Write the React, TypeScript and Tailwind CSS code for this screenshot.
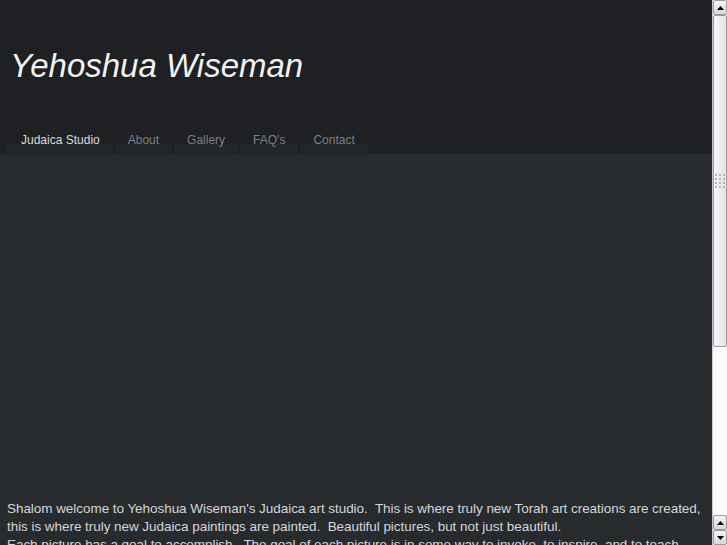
const tabs = ['Judaica Studio', 'About', 'Gallery', "FAQ's", 'Contact']

function Arrow({ down }: { down?: boolean }) {
  return (
    <div className="h-[15px] shrink-0 flex items-center justify-center bg-gradient-to-b from-[#f4f4f6] to-[#d8d8dc] border border-[#9c9c9c] rounded-[2px]">
      <svg width="7" height="4" viewBox="0 0 7 4" className={down ? 'rotate-180' : ''}>
        <polygon points="3.5,0 7,4 0,4" fill="#000" />
      </svg>
    </div>
  )
}

function Scrollbar() {
  return (
    <div className="w-[15px] h-full flex flex-col bg-[#fbfbfb] border-l border-[#c8c8c8]">
      <Arrow />
      <div className="h-[332px] shrink-0 flex flex-col items-center justify-center bg-gradient-to-r from-[#f6f6fa] to-[#e2e2ea] border border-[#9a9a9a] rounded-[2px]">
        <div className="grid grid-cols-3 gap-[2px]">
          {Array.from({ length: 12 }).map((_, i) => (
            <div key={i} className="w-[2px] h-[2px] bg-[#b4b4b8]" />
          ))}
        </div>
      </div>
      <div className="flex-1" />
      <Arrow />
      <Arrow down />
    </div>
  )
}

export default function App() {
  return (
    <div className="h-[545px] w-full flex overflow-hidden bg-[#282b2e] font-['Liberation_Sans',Arial,sans-serif]">
      <div className="flex-1 min-w-0 flex flex-col">
        <header className="h-[154px] shrink-0 bg-[#1e2023] flex flex-col">
          <h1 className="pl-[10px] pt-[44px] text-[33px] leading-[44px] italic text-[#f2f2f2]">Yehoshua Wiseman</h1>
          <nav className="mt-auto flex gap-[2px] pl-[7px]">
            {tabs.map((t, i) => (
              <div key={t} className="flex flex-col">
                <span className={`relative z-10 px-[13px] pt-[2px] text-[12px] leading-[14px] ${i === 0 ? 'pl-[14px] text-[#dcdcdc]' : 'text-[#7c8185]'}`}>{t}</span>
                <div className="h-[10px] -mt-[3px] bg-[#24272a]" />
              </div>
            ))}
          </nav>
        </header>
        <div className="h-[346px] shrink-0" />
        <div className="pl-[7px] pr-[2px] text-[13.5px] leading-[18px] tracking-[-0.05px] text-[#d4d6d8] whitespace-pre-wrap">
          {"Shalom welcome to Yehoshua Wiseman's Judaica art studio.  This is where truly new Torah art creations are created, this is where truly new Judaica paintings are painted.  Beautiful pictures, but not just beautiful.\nEach picture has a goal to accomplish.  The goal of each picture is in some way to invoke, to inspire, and to teach."}
        </div>
      </div>
      <Scrollbar />
    </div>
  )
}
